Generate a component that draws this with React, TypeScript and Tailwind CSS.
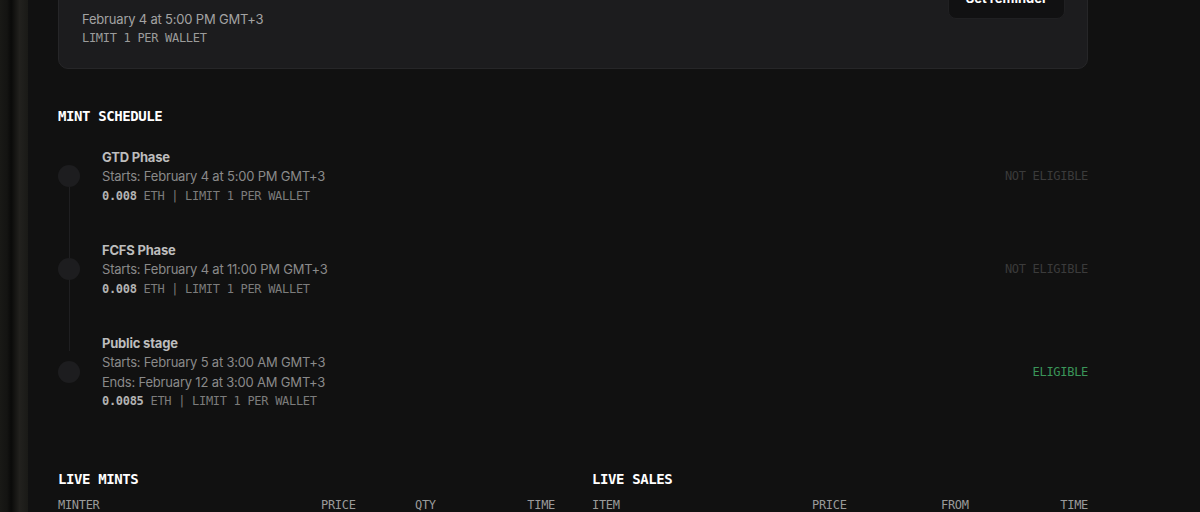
const sans = "font-['Inter','Noto_Sans',sans-serif]";
const mono = "font-['DejaVu_Sans_Mono','Liberation_Mono',monospace]";

const phases = [
  { name: "GTD Phase", lines: ["Starts: February 4 at 5:00 PM GMT+3"], price: "0.008", eligible: false },
  { name: "FCFS Phase", lines: ["Starts: February 4 at 11:00 PM GMT+3"], price: "0.008", eligible: false },
  {
    name: "Public stage",
    lines: ["Starts: February 5 at 3:00 AM GMT+3", "Ends: February 12 at 3:00 AM GMT+3"],
    price: "0.0085",
    eligible: true,
  },
];

export default function App() {
  return (
    <div className="flex h-[512px] w-[1200px] overflow-hidden bg-[#111111]">
      {/* blurred backdrop strip on the left */}
      <div className="h-full w-[28px] shrink-0 bg-[linear-gradient(to_right,#191916_0%,#141412_25%,#0a0a09_40%,#22211e_70%,#1a1a17_100%)]" />

      <div className="flex-1 pl-[30px] pr-[112px]">
        {/* countdown card */}
        <div className="-mt-[42px] flex items-start justify-between rounded-[10px] border border-[#262628] bg-[#1c1c1e] pt-[20px] pb-[21px] pl-[23px] pr-[22px]">
          <div className="mt-[30px]">
            <div className={`${sans} text-[13px] leading-[20px] tracking-[-0.2px] text-[#a3a3a3]`}>February 4 at 5:00 PM GMT+3</div>
            <div className={`${mono} text-[12px] leading-[18px] tracking-[-0.3px] text-[#9b9b9b]`}>LIMIT 1 PER WALLET</div>
          </div>
          <button className={`${sans} h-[40px] w-[117px] rounded-[8px] border border-[#202022] bg-[#111112] text-[13px] font-bold text-white`}>
            Set reminder
          </button>
        </div>

        <h2 className={`${mono} mt-[38px] text-[14px] font-bold leading-[18px] tracking-[-0.4px] text-white`}>MINT SCHEDULE</h2>

        {/* phases timeline */}
        <div className="relative mt-[22px] flex flex-col gap-[35.5px]">
          <div className="absolute left-[11px] top-[29px] h-[175px] w-px bg-[#1f1f21]" />
          {phases.map((p) => (
            <div key={p.name} className="relative flex items-center">
              <div className="h-[22px] w-[22px] shrink-0 rounded-full bg-[#1d1d1f]" />
              <div className="ml-[22px] flex-1">
                <div className={`${sans} text-[13px] font-bold leading-[20px] tracking-[-0.2px] text-[#bdbdbd]`}>{p.name}</div>
                {p.lines.map((l) => (
                  <div key={l} className={`${sans} text-[13px] leading-[19.5px] tracking-[-0.2px] text-[#8a8a8a]`}>{l}</div>
                ))}
                <div className={`${mono} text-[12px] leading-[18px] tracking-[-0.3px] text-[#7c7c7c]`}>
                  <span className="font-bold text-[#b3b3b3]">{p.price}</span> ETH | LIMIT 1 PER WALLET
                </div>
              </div>
              <div
                className={`${mono} text-[12px] tracking-[-0.3px] ${p.eligible ? "text-[#3a9659]" : "text-[#3b3b3b]"}`}
              >
                {p.eligible ? "ELIGIBLE" : "NOT ELIGIBLE"}
              </div>
            </div>
          ))}
        </div>

        {/* live activity */}
        <div className="mt-[60px] grid grid-cols-[497px_1fr] gap-[37px]">
          <div>
            <h3 className={`${mono} text-[14px] font-bold leading-[18px] tracking-[-0.4px] text-white`}>LIVE MINTS</h3>
            <div className={`${mono} mt-[8px] grid grid-cols-[263px_94px_1fr_auto] text-[12px] leading-[18px] tracking-[-0.3px] text-[#9a9a9a]`}>
              <span>MINTER</span>
              <span>PRICE</span>
              <span>QTY</span>
              <span className="text-right">TIME</span>
            </div>
          </div>
          <div>
            <h3 className={`${mono} text-[14px] font-bold leading-[18px] tracking-[-0.4px] text-white`}>LIVE SALES</h3>
            <div className={`${mono} mt-[8px] grid grid-cols-[220px_129px_1fr_auto] text-[12px] leading-[18px] tracking-[-0.3px] text-[#9a9a9a]`}>
              <span>ITEM</span>
              <span>PRICE</span>
              <span>FROM</span>
              <span className="text-right">TIME</span>
            </div>
          </div>
        </div>
      </div>
    </div>
  );
}
